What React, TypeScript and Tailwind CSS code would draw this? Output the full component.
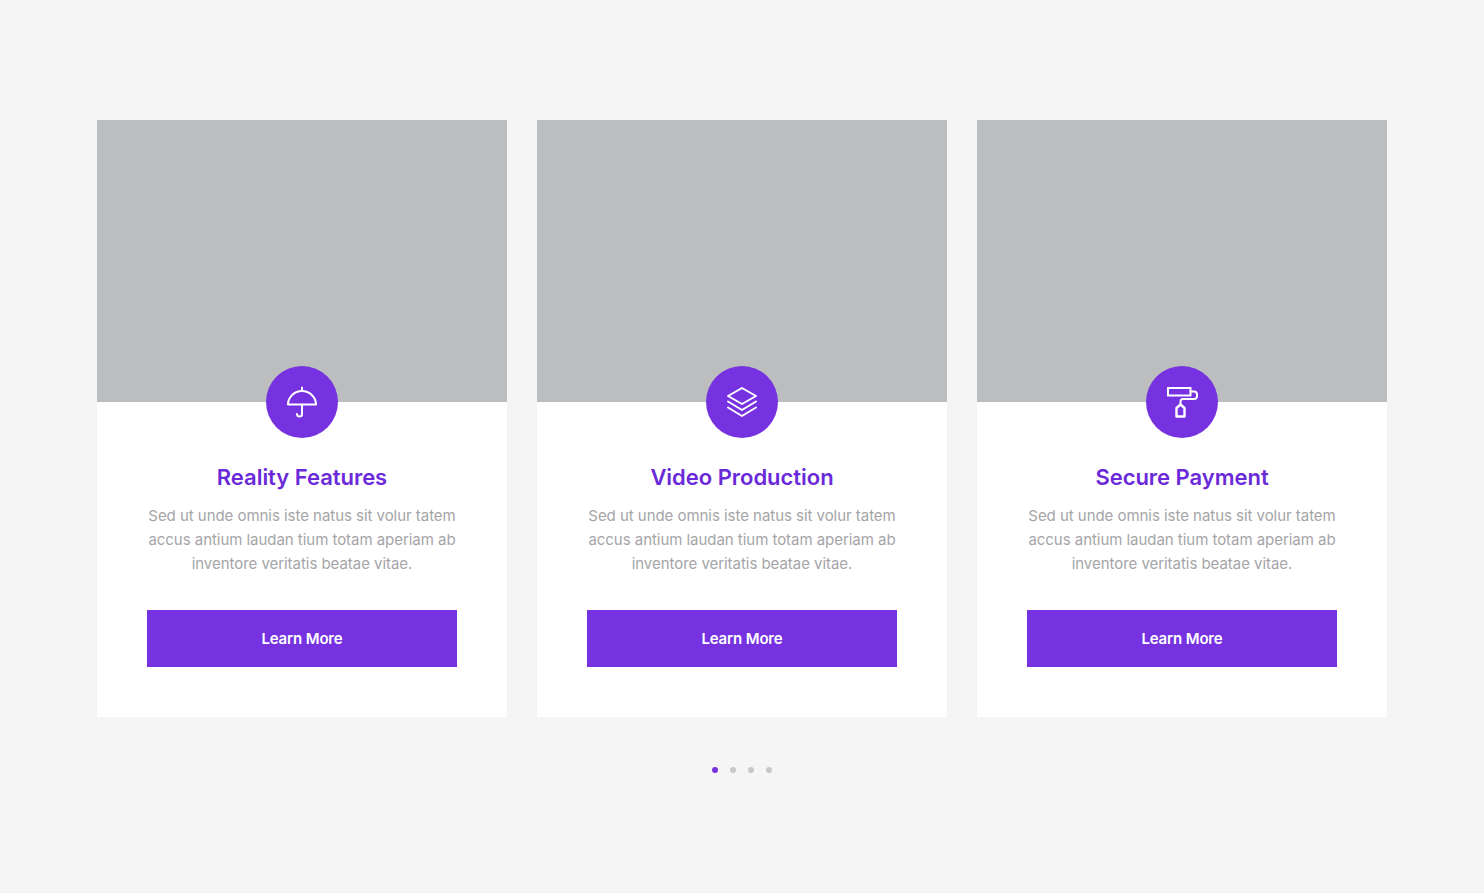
const cards = [
  { title: "Reality Features", icon: "umbrella" },
  { title: "Video Production", icon: "layers" },
  { title: "Secure Payment", icon: "roller" },
];

function CardIcon({ name }: { name: string }) {
  return (
    <svg width="36" height="36" viewBox="0 0 36 36" fill="none" stroke="white" strokeWidth="2" strokeLinejoin="round" strokeLinecap="round">
      {name === "umbrella" && (
        <>
          <path d="M18 3.500v3.500" />
          <path d="M4 20.500C4 13 10.500 7 18 7s14 6 14 13.500z" />
          <path d="M18 20.500V30a2.500 2.500 0 0 1-5 0" />
        </>
      )}
      {name === "layers" && (
        <>
          <path d="M18 4 32 12 18 20 4 12z" />
          <path d="M4 17.500 18 26l14-8.500" />
          <path d="M4 23.500 18 32l14-8.500" />
        </>
      )}
      {name === "roller" && (
        <>
          <rect x="4" y="4" width="22.500" height="7.500" strokeLinejoin="miter" />
          <path d="M26.500 7.500H30a3 3 0 0 1 3 3V12a3 3 0 0 1-3 3H19a2.500 2.500 0 0 0-2.500 2.500V20" />
          <path d="M12.500 32.500V24l4-3.500 4 3.500v8.500z" strokeWidth="2.400" />
        </>
      )}
    </svg>
  );
}

export default function App() {
  return (
    <div className="min-h-[893px] bg-[#f5f5f5] pt-[120px] font-['Inter',sans-serif]">
      <div className="flex justify-center gap-[30px]">
        {cards.map((card) => (
          <div key={card.title} className="w-[410px] bg-white pb-[50px]">
            <div className="h-[282px] bg-[#bcbdbf]" />
            <div className="relative mx-auto -mt-9 flex h-[72px] w-[72px] items-center justify-center rounded-full bg-[#7632e0]">
              <CardIcon name={card.icon} />
            </div>
            <div className="px-[50px] pt-[25px] text-center">
              <h3 className="text-[22px] leading-[28px] font-semibold tracking-[-0.03px] text-[#6b2ad9]">{card.title}</h3>
              <p className="mt-[13px] text-[15px] leading-[24px] tracking-[-0.04px] text-[#a5a5a8]">
                Sed ut unde omnis iste natus sit volur tatem accus antium laudan tium totam aperiam ab inventore veritatis beatae vitae.
              </p>
              <button className="mt-[34px] h-[57px] w-full bg-[#7632e0] pt-[2px] text-[15px] font-semibold tracking-[-0.15px] text-white">
                Learn More
              </button>
            </div>
          </div>
        ))}
      </div>
      <div className="mt-[50px] flex justify-center gap-3">
        <span className="h-1.5 w-1.5 rounded-full bg-[#7632e0]" />
        <span className="h-1.5 w-1.5 rounded-full bg-[#c8c8c8]" />
        <span className="h-1.5 w-1.5 rounded-full bg-[#c8c8c8]" />
        <span className="h-1.5 w-1.5 rounded-full bg-[#c8c8c8]" />
      </div>
    </div>
  );
}
